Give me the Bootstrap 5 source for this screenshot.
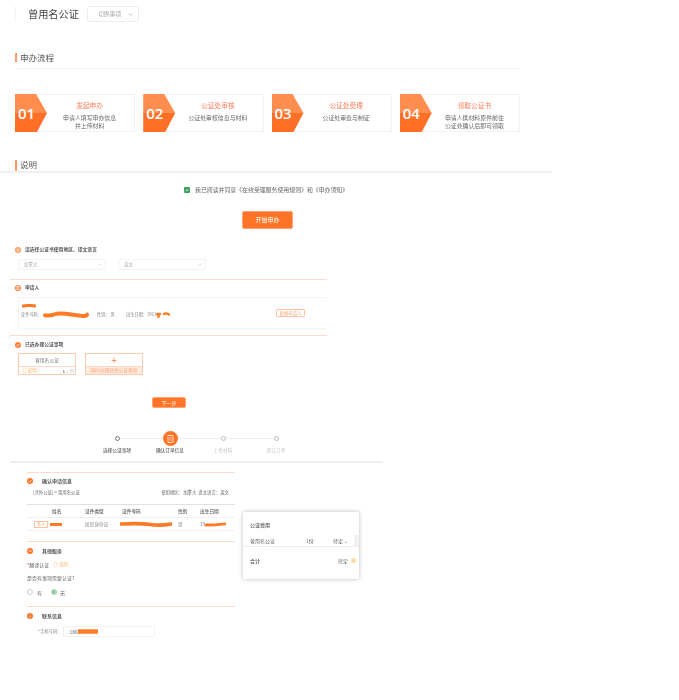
<!DOCTYPE html>
<html lang="zh">
<head>
<meta charset="utf-8">
<title>曾用名公证</title>
<link href="https://cdn.jsdelivr.net/npm/bootstrap@5.3.0/dist/css/bootstrap.min.css" rel="stylesheet">
<style>
body{background:#fff;font-family:"Noto Sans CJK SC","Liberation Sans",sans-serif;color:#555;font-size:6px;line-height:1;overflow:hidden;white-space:nowrap}
.pg{position:relative;width:679px;height:700px;padding-top:6px;filter:blur(.35px)}
.hd{margin:0 0 0 15px;height:16px;border-left:1px solid #f3f3f3}
.hd-title{margin-left:12px;font-size:10.2px;color:#444;width:59px}
.pick{width:52px;height:16px;border:1px solid #eee;border-radius:2px;padding:0 5px 0 10px;color:#aaa;font-size:5.8px}
.sec-t{font-size:8.5px;color:#555;border-left:2px solid #ff9a63;padding-left:3px;height:9px;line-height:9px;margin-left:15px}
.proc{margin:31px 0 0 15px;width:505px;padding-bottom:6px;border-bottom:1px solid #f2f2f2}
.proc .sec-t{margin-left:0}
.flow-row{margin:25px 0 0 15px;width:505px;height:38px;gap:8px}
.flow-card{flex:1 1 0;border:1px solid #f2f2f2;position:relative}
.flow-arrow{width:32px;flex:none;margin:-1px 0 -1px -1px;height:38px;clip-path:polygon(0 0,21px 0,32px 50%,22px 100%,0 100%);background:linear-gradient(#ff8d50 0,#ff8d50 51%,#ff7026 51%);color:#fff;font:600 15px/38px "Open Sans",sans-serif;padding-left:3px}
.flow-body{flex:1;text-align:center;padding:7px 2px 0 0;font-size:5.9px;line-height:7.6px;color:#666}
.flow-h{color:#ff7d5c;font-size:6.7px;line-height:7px;margin-bottom:5px}
.shuo{margin-top:28px;height:11px}
.gline{height:2px;background:#efefef}
.gl1{width:552px}
.agree{margin:13px 0 0 184px;height:7px;font-size:5.9px;color:#666;gap:5px}
.chk{width:6px;height:6px;background:#3f9f5f;border-radius:1px;flex:none;display:block}
.cta{display:block;margin:18px 0 0 242px;width:51px;height:18px;padding:0;border:1px solid #ffa477;border-radius:2px;background:#ff7426;color:#fff;font-size:6px;line-height:16px}
.cta-s{margin:22px 0 0 152px;width:34px;height:11px;font-size:5px;line-height:9px}
.st-h{height:7px;margin:0 0 0 15px;gap:4px;font-size:4.8px;font-weight:700;color:#555}
.ico{width:6px;height:6px;flex:none;display:block}
.sel-row{margin:6px 0 0 18px;height:11px;gap:12px}
.sel-b{width:88px;height:11px;border:1px solid #f2f2f2;border-radius:1px;padding:0 3px 0 5px;font-size:4.5px;color:#aaa}
.dash{height:1px;margin-left:10px;width:317px;background:#ffdcc9}
.appl{margin:6px 0 0 18px;width:309px;height:32px;border:1px solid #f4f4f4;border-right:0;position:relative;font-size:4.2px;color:#888;padding:0 2px}
.scr{display:block;flex:none}
.scr-name{margin:6px 0 3px 1px}
.id-row{height:7px}
.lb-id{width:22px;flex:none}
.lb-sex{margin-left:8px;width:29px}
.swap{position:absolute;left:257px;top:11px;width:29px;height:8px;border:1px solid #ffc3a3;border-radius:1px;color:#f9a27a;font-size:4.4px;line-height:6px;text-align:center}
.pick-row{margin:5px 0 0 18px;gap:9px;height:22px}
.mini{width:58px;height:22px;border:1px solid #ffc9ab;font-size:4.8px;color:#777}
.mini-t{height:13px;line-height:12px;text-align:center;border-bottom:1px solid #ffd8c3}
.mini-b{height:7px;padding:0 1px 0 3px;color:#bbb;font-size:4px}
.plus{color:#ff7b33;font-size:10px;font-weight:400;text-align:center}
.mini-o{background:#ffecdf;color:#f9a27a;text-align:center;line-height:7px;height:7px;font-size:4.7px}
.stp{margin:23px 0 0 90.5px;width:212px;height:25px}
.stp-c{width:53px;text-align:center;position:relative;font-size:4.7px;color:#666;font-weight:500}
.stp-c.off{color:#c6c6c6;font-weight:400}
.stp-c:not(:last-child)::after{content:"";position:absolute;left:50%;width:100%;top:7px;height:1px;background:#eee}
.stp-i{height:15px;margin-bottom:2px;position:relative;z-index:1}
.dot{width:5px;height:5px;border:1px solid #777;border-radius:50%;background:#fff}
.off .dot{border-color:#bbb}
.big{width:15px;height:15px;border-radius:50%;background:#ff7426}
.gl2{margin:5px 0 0 10px;width:373px}
.left{margin-left:27px;width:208px}
.left .dash{margin-left:0;width:208px}
.left .st-h{margin:5px 0 0 0;gap:9px;font-size:5px}
.left .st-h.first{margin-top:4px}
.path{margin-top:6px;height:6px;font-size:4.4px;color:#666;padding:0 6px}
.tb{table-layout:fixed;width:208px;margin:8px 0 0;font-size:4.7px;color:#666;--bs-table-border-color:#f0f0f0}
.tb th,.tb td{padding:0;height:13px;vertical-align:middle;font-weight:500}
.tb td{font-weight:400;color:#888}
.tb .th-name{padding-left:25px}
.c1{width:58px}
.c2{width:37px}
.c3{width:56px}
.c4{width:22px}
.td-name{padding-left:7px;gap:2px}
.scr-id{margin-left:-2px}
.tag{display:inline-block;width:14px;height:7px;border:1px solid #ffc3a3;color:#f6a27a;line-height:5px;text-align:center;font-size:4px}
.ln{height:6px;font-size:5px;color:#666}
.note{color:#fdb566;font-size:4.6px}
.rad{width:6px;height:6px;border:1px solid #ccc;border-radius:50%;display:block;flex:none}
.rad.on{border-color:#a6d8b6;background:#3f9f5f;box-shadow:inset 0 0 0 1px #e3f4e8}
.lab-y{width:18px;padding-left:4px}
.lab-n{padding-left:3px}
.phone{margin:7px 0 0 11px;height:11px;font-size:4.3px;color:#888;gap:1px}
.inp{width:92px;height:11px;border:1px solid #f2f2f2;border-radius:1px;padding-left:6px;color:#666;font-size:5px}
.fee{position:absolute;left:243px;top:512px;width:116px;height:67px;background:#fff;box-shadow:0 0 4px rgba(0,0,0,.28);border-radius:1px;font-size:5px;color:#666}
.fee-t{padding:10px 7px 0;height:23px;font-weight:500;color:#555}
.fee-r{height:12px;padding:0 11px 0 7px;border-bottom:1px solid #eee;position:relative}
.fee-n{width:57px}
.fee-p{margin-left:19px}
.bar{position:absolute;right:0;top:0;bottom:0;width:5px;background:#f1f1f1}
.fee-s{padding:0 3px 0 7px;margin-top:11px}
.dotl{width:5px;height:5px;border-radius:50%;background:#ffd9a8;margin-left:3px;display:block}
.gap4{margin-top:4px}
.gap5{margin-top:5px}
.gap6{margin-top:6px}
.gap7{margin-top:7px}
.gap8{margin-top:8px}
.gap9{margin-top:9px}
.gap10{margin-top:10px}
.gap11{margin-top:11px}
.st-h.gap17{margin-top:17px}
.st-h.gap4{margin-top:4px}
.st-h.gap5{margin-top:5px}
</style>
</head>
<body>
<div class="pg">
  <div class="hd d-flex align-items-center">
    <div class="hd-title">曾用名公证</div>
    <div class="pick d-flex align-items-center justify-content-between"><span>切换事项</span><svg width="5" height="3" viewBox="0 0 5 3"><path d="M.5.5 2.5 2.5 4.5.5" fill="none" stroke="#999" stroke-width=".6"/></svg></div>
  </div>

  <div class="proc"><div class="sec-t">申办流程</div></div>

  <div class="flow-row d-flex">
    <div class="flow-card d-flex"><div class="flow-arrow">01</div><div class="flow-body"><div class="flow-h">发起申办</div>申请人填写申办信息<br>并上传材料</div></div>
    <div class="flow-card d-flex"><div class="flow-arrow">02</div><div class="flow-body"><div class="flow-h">公证处审核</div>公证处审核信息与材料</div></div>
    <div class="flow-card d-flex"><div class="flow-arrow">03</div><div class="flow-body"><div class="flow-h">公证处受理</div>公证处审查与制证</div></div>
    <div class="flow-card d-flex"><div class="flow-arrow">04</div><div class="flow-body"><div class="flow-h">领取公证书</div>申请人携材料原件前往<br>公证处确认后即可领取</div></div>
  </div>

  <div class="sec-t shuo">说明</div>
  <div class="gline gl1"></div>

  <div class="agree d-flex align-items-center">
    <svg class="chk" viewBox="0 0 6 6"><path d="M1.5 3 2.6 4.1 4.5 2" fill="none" stroke="#fff" stroke-width=".8"/></svg>
    <span>我已阅读并同意《在线受理服务使用规则》和《申办须知》</span>
  </div>
  <button type="button" class="btn cta">开始申办</button>

  <div class="st-h d-flex align-items-center gap17">
    <svg class="ico" viewBox="0 0 6 6"><circle cx="3" cy="3" r="3" fill="#ff9a63"/><path d="M1.5 2.2h3M1.5 3.8h3" stroke="#fff" stroke-width=".7"/></svg>
    <span>请选择公证书使用地区、译文语言</span>
  </div>
  <div class="sel-row d-flex">
    <div class="sel-b d-flex align-items-center justify-content-between"><span>加拿大</span><svg width="4" height="3" viewBox="0 0 4 3"><path d="M.5.8 2 2.2 3.5.8" fill="none" stroke="#bbb" stroke-width=".5"/></svg></div>
    <div class="sel-b d-flex align-items-center justify-content-between"><span>英文</span><svg width="4" height="3" viewBox="0 0 4 3"><path d="M.5.8 2 2.2 3.5.8" fill="none" stroke="#bbb" stroke-width=".5"/></svg></div>
  </div>
  <div class="dash gap9"></div>

  <div class="st-h d-flex align-items-center gap4">
    <svg class="ico" viewBox="0 0 6 6"><circle cx="3" cy="3" r="3" fill="#ff7f3a"/><rect x="2" y="1.5" width="2" height="3" fill="none" stroke="#fff" stroke-width=".7"/></svg>
    <span>申请人</span>
  </div>
  <div class="appl">
    <svg class="scr scr-name" width="14" height="4" viewBox="0 0 14 4"><path d="M1 2Q7 .8 13 2" stroke="#ff7a26" stroke-width="3" fill="none" stroke-linecap="round"/></svg>
    <div class="d-flex align-items-center id-row">
      <span class="lb-id">证件号码：</span>
      <svg class="scr" width="46" height="7" viewBox="0 0 46 7"><path d="M2 4.2Q8 5 12 3.2T30 3.8 44 3.4" stroke="#ff7a26" stroke-width="4" fill="none" stroke-linecap="round"/></svg>
      <span class="lb-sex">性别： 男</span>
      <span>出生日期：1961</span>
      <svg class="scr" width="14" height="7" viewBox="0 0 14 7"><path d="M1 3H4M2.5 3V6M8 3Q10 1.5 13 3.5" stroke="#ff7a26" stroke-width="2.4" fill="none" stroke-linecap="round"/></svg>
    </div>
    <div class="swap">更换申请人</div>
  </div>
  <div class="dash gap6"></div>

  <div class="st-h d-flex align-items-center gap5">
    <svg class="ico" viewBox="0 0 6 6"><circle cx="3" cy="3" r="3" fill="#ff7f3a"/><path d="M1.5 3 2.7 4.1 4.6 2" fill="none" stroke="#fff" stroke-width=".7"/></svg>
    <span>已选办理公证事项</span>
  </div>
  <div class="pick-row d-flex">
    <div class="mini">
      <div class="mini-t">曾用名公证</div>
      <div class="mini-b d-flex align-items-center justify-content-between"><span class="note">◎ 说明</span><span>- &nbsp;<span class="text-body">1</span>&nbsp; + 份</span></div>
    </div>
    <div class="mini">
      <div class="mini-t plus">+</div>
      <div class="mini-o">同时办理其他公证事项</div>
    </div>
  </div>
  <button type="button" class="btn cta cta-s">下一步</button>

  <div class="stp d-flex">
    <div class="stp-c"><div class="stp-i d-flex align-items-center justify-content-center"><span class="dot"></span></div>选择公证事项</div>
    <div class="stp-c"><div class="stp-i d-flex align-items-center justify-content-center"><span class="big d-flex align-items-center justify-content-center"><svg width="7" height="8" viewBox="0 0 7 8"><path d="M1 .5H6V7.5H1ZM2.3 3H4.7M2.3 5H4.7" fill="none" stroke="#fff" stroke-width=".7"/></svg></span></div>确认订单信息</div>
    <div class="stp-c off"><div class="stp-i d-flex align-items-center justify-content-center"><span class="dot"></span></div>上传材料</div>
    <div class="stp-c off"><div class="stp-i d-flex align-items-center justify-content-center"><span class="dot"></span></div>提交订单</div>
  </div>
  <div class="gline gl2"></div>

  <div class="left">
    <div class="dash gap9"></div>
    <div class="st-h first d-flex align-items-center">
      <svg class="ico" viewBox="0 0 6 6"><circle cx="3" cy="3" r="3" fill="#ff7426"/><path d="M1.5 3 2.7 4.1 4.6 2" fill="none" stroke="#fff" stroke-width=".7"/></svg>
      <span>确认申请信息</span>
    </div>
    <div class="path d-flex justify-content-between"><span>[涉外公证] &gt; 曾用名公证</span><span>使用地区：加拿大 &nbsp;译文语言：英文</span></div>
    <table class="table tb">
      <colgroup><col class="c1"><col class="c2"><col class="c3"><col class="c4"><col></colgroup>
      <thead class="border-top"><tr><th class="th-name">姓名</th><th>证件类型</th><th>证件号码</th><th>性别</th><th>出生日期</th></tr></thead>
      <tbody><tr>
        <td><div class="d-flex align-items-center td-name"><span class="tag">本人</span><svg class="scr" width="12" height="5" viewBox="0 0 12 5"><path d="M1 2.5H11" stroke="#ff7a26" stroke-width="3" stroke-linecap="round"/></svg></div></td>
        <td>居民身份证</td>
        <td><svg class="scr scr-id" width="52" height="6" viewBox="0 0 52 6"><path d="M1 3Q20 2 30 3.5T51 3" stroke="#ff7a26" stroke-width="3.6" fill="none" stroke-linecap="round"/></svg></td>
        <td>男</td>
        <td><div class="d-flex align-items-center">19<svg class="scr" width="21" height="5" viewBox="0 0 21 5"><path d="M1 3Q10 3 20 1.8" stroke="#ff7a26" stroke-width="2.8" fill="none" stroke-linecap="round"/></svg></div></td>
      </tr></tbody>
    </table>
    <div class="dash gap10"></div>
    <div class="st-h d-flex align-items-center">
      <svg class="ico" viewBox="0 0 6 6"><circle cx="3" cy="3" r="3" fill="#ff7426"/><path d="M1.5 3H4.5" stroke="#fff" stroke-width=".8"/></svg>
      <span>其他服务</span>
    </div>
    <div class="ln d-flex align-items-center gap7"><span><span class="text-danger">*</span>翻译认证</span><span class="note ms-1">◎ 说明</span></div>
    <div class="ln gap8">是否有事项需要认证?</div>
    <div class="ln d-flex align-items-center gap8"><span class="rad"></span><span class="lab-y">有</span><span class="rad on"></span><span class="lab-n">无</span></div>
    <div class="dash gap11"></div>
    <div class="st-h d-flex align-items-center">
      <svg class="ico" viewBox="0 0 6 6"><circle cx="3" cy="3" r="3" fill="#ff7426"/><path d="M3 1.5V2.2M3 2.8V4.6" stroke="#fff" stroke-width=".8"/></svg>
      <span>联系信息</span>
    </div>
    <div class="phone d-flex align-items-center">
      <span><span class="text-danger">*</span>手机号码：</span>
      <div class="inp d-flex align-items-center">186<svg class="scr" width="20" height="7" viewBox="0 0 20 7"><path d="M1 3.5H19" stroke="#ff7a26" stroke-width="4.6" stroke-linecap="round"/></svg></div>
    </div>
  </div>

  <div class="fee">
    <div class="fee-t">公证费用</div>
    <div class="fee-r d-flex align-items-center">
      <span class="fee-n">曾用名公证</span><span>1份</span><span class="fee-p">待定 ⌄</span>
      <div class="bar"></div>
    </div>
    <div class="fee-s d-flex align-items-center justify-content-between">
      <b class="fw-bold">合计</b>
      <span class="d-flex align-items-center">待定<span class="dotl"></span></span>
    </div>
  </div>
</div>
<script src="https://cdn.jsdelivr.net/npm/bootstrap@5.3.0/dist/js/bootstrap.bundle.min.js"></script>
</body>
</html>
